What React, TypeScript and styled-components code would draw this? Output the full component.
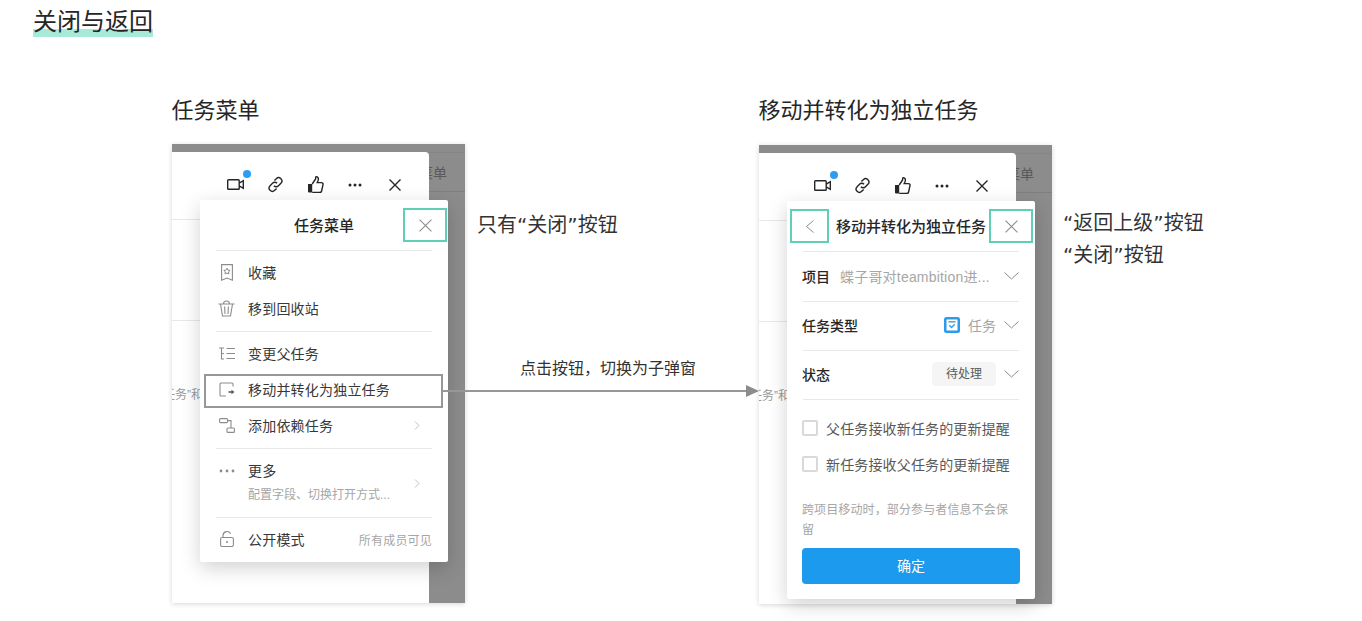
import React from "react";
import styled, { createGlobalStyle } from "styled-components";

const Global = createGlobalStyle`
  html, body { margin: 0; padding: 0; background: #fff; }
  body { font-family: "Liberation Sans", "Noto Sans CJK SC", sans-serif; color: #262626; }
`;

const Page = styled.div`
  padding: 9px 0 0 33px;
  width: 1362px;
  height: 621px;
  box-sizing: border-box;
  overflow: hidden;
`;
const Title = styled.h1`
  display: inline-block;
  margin: 0;
  padding-bottom: 2px;
  font-size: 24px;
  line-height: 26px;
  font-weight: 400;
  color: #262626;
  background: linear-gradient(to top, #a8ead8 8px, transparent 8px);
`;
const Board = styled.div`
  display: grid;
  grid-template-columns: 293px 294px 293px auto;
  margin: 56px 0 0 139px;
`;
const Column = styled.section``;
const SectionTitle = styled.h2<{ $gap: number }>`
  margin: 1px 0 ${(p) => p.$gap}px -0.5px;
  font-size: 22px;
  line-height: 34px;
  font-weight: 400;
  white-space: nowrap;
`;
const Mock = styled.div`
  position: relative;
  display: flex;
  width: 293px;
  height: 459px;
  padding-top: 8px;
  box-sizing: border-box;
  background: #8c8c8c;
  box-shadow: 0 1px 5px rgba(0, 0, 0, 0.16);
`;
const Win = styled.div`
  width: 257px;
  flex: none;
  background: #fff;
  border-top-right-radius: 4px;
  overflow: hidden;
`;
const Toolbar = styled.div`
  display: flex;
  align-items: center;
  justify-content: flex-end;
  height: 68px;
  padding: 0 14px 2px 0;
  box-sizing: border-box;
  border-bottom: 1px solid #e8e8e8;
`;
const ToolSlot = styled.span`
  position: relative;
  flex: none;
  width: 40px;
  display: flex;
  justify-content: center;
  align-items: center;
  svg { display: block; }
`;
const Dot = styled.span`
  position: absolute;
  top: -9px;
  left: 28px;
  width: 8px;
  height: 8px;
  border-radius: 50%;
  background: #2e9cf0;
`;
const BehindLine = styled.div`
  height: 1px;
  margin-top: 100px;
  background: #e8e8e8;
`;
const BehindText = styled.div`
  margin: 66px 0 0 -9px;
  font-size: 12px;
  line-height: 16px;
  color: #999;
  white-space: nowrap;
`;
const Side = styled.div`
  flex: 1;
  min-width: 0;
  height: 40px;
  display: flex;
  align-items: center;
  justify-content: flex-end;
  overflow: hidden;
  padding-right: 18px;
  border-bottom: 1px solid #7f7f7f;
  border-top: 1px solid #858585;
  box-sizing: border-box;
  font-size: 14px;
  color: #5a5a5a;
  white-space: nowrap;
`;
const Popup = styled.div<{ $height: number }>`
  position: absolute;
  left: 28px;
  top: 56px;
  width: 248px;
  height: ${(p) => p.$height}px;
  background: #fff;
  border-radius: 2px;
  box-shadow: 0 6px 20px rgba(0, 0, 0, 0.18);
  display: flex;
  flex-direction: column;
`;
const PopupHead = styled.div`
  position: relative;
  flex: none;
  height: 51px;
  margin: 0 16px;
  padding-bottom: 2px;
  border-bottom: 1px solid #e8e8e8;
  box-sizing: border-box;
  display: flex;
  align-items: center;
  justify-content: center;
  font-size: 15px;
  font-weight: 500;
  color: #262626;
  white-space: nowrap;
`;
const Mark = styled.div<{ $left?: number; $right?: number; $width: number }>`
  position: absolute;
  top: 8px;
  ${(p) => (p.$left !== undefined ? `left: ${p.$left}px;` : `right: ${p.$right}px;`)}
  width: ${(p) => p.$width}px;
  height: 34px;
  box-sizing: border-box;
  border: 2px solid #5fcfb5;
  display: flex;
  align-items: center;
  justify-content: center;
`;
const Group = styled.div`
  padding: 4px 16px;
  flex: none;
`;
const MoreGroup = styled.div`
  padding: 0 16px;
  flex: none;
`;
const Divider = styled.div`
  height: 1px;
  margin: 0 16px;
  background: #e8e8e8;
  flex: none;
`;
const MenuRow = styled.div<{ $hot?: boolean }>`
  position: relative;
  display: flex;
  align-items: center;
  height: 36px;
  padding-bottom: 2px;
  box-sizing: border-box;
  font-size: 14px;
  letter-spacing: 0.2px;
  color: #383838;
  white-space: nowrap;
  ${(p) =>
    p.$hot
      ? `&::before {
    content: "";
    position: absolute;
    left: -12px;
    right: -11px;
    top: 2px;
    bottom: 0;
    border: 2px solid #979797;
  }`
      : ""}
`;
const IconSlot = styled.span`
  position: relative;
  flex: none;
  width: 21px;
  margin-right: 11px;
  display: flex;
  justify-content: center;
  align-items: center;
  svg { display: block; }
`;
const MoreIconSlot = styled(IconSlot)`
  align-self: flex-start;
  margin-top: 20px;
`;
const RowLabel = styled.span`
  position: relative;
  flex: 1;
`;
const RowHint = styled.span`
  font-size: 12px;
  letter-spacing: 0.2px;
  color: #a6a6a6;
`;
const RightArrow = styled.span`
  flex: none;
  margin-right: 12px;
  svg { display: block; }
`;
const MoreRow = styled.div`
  display: flex;
  align-items: center;
  height: 68px;
`;
const MoreText = styled.div`
  flex: 1;
  font-size: 14px;
  letter-spacing: 0.2px;
  color: #383838;
  line-height: 24px;
  white-space: nowrap;
`;
const MoreSub = styled.div`
  font-size: 12px;
  letter-spacing: 0;
  color: #a6a6a6;
`;
const Fields = styled.div`
  flex: none;
  padding-top: 1px;
`;
const FieldRow = styled.div`
  height: 49px;
  margin: 0 16px;
  box-sizing: border-box;
  border-bottom: 1px solid #e8e8e8;
  display: flex;
  align-items: center;
  gap: 8px;
  font-size: 14px;
  white-space: nowrap;
  padding-bottom: 2px;
`;
const FieldLabel = styled.span<{ $grow?: boolean }>`
  flex: ${(p) => (p.$grow ? 1 : "none")};
  margin-left: -1px;
  color: #262626;
  font-weight: 500;
`;
const FieldValue = styled.span`
  flex: 1;
  min-width: 0;
  margin-left: 2px;
  color: #a6a6a6;
  letter-spacing: 0.2px;
`;
const FieldMuted = styled.span`
  color: #a6a6a6;
`;
const Chip = styled.span`
  width: 64px;
  height: 24px;
  border-radius: 4px;
  background: #f5f5f5;
  color: #595959;
  font-size: 12px;
  line-height: 24px;
  text-align: center;
`;
const Chevron = styled.span`
  flex: none;
  svg { display: block; }
`;
const CheckGroup = styled.div`
  margin: 10px 16px 0 15px;
`;
const CheckRow = styled.label`
  display: flex;
  align-items: center;
  gap: 8px;
  height: 36px;
  padding-bottom: 1px;
  box-sizing: border-box;
  font-size: 14px;
  letter-spacing: 0.15px;
  color: #595959;
  white-space: nowrap;
`;
const Box = styled.span`
  flex: none;
  width: 16px;
  height: 16px;
  box-sizing: border-box;
  border: 2px solid #d9d9d9;
  border-radius: 2px;
`;
const Note = styled.p`
  margin: 19px 16px 0 15px;
  width: 212px;
  font-size: 12px;
  letter-spacing: 0.12px;
  line-height: 19.5px;
  color: #a6a6a6;
`;
const Confirm = styled.button`
  display: block;
  flex: none;
  margin: 8px 15px 0;
  height: 36px;
  padding: 0 0 3px;
  border: none;
  border-radius: 4px;
  background: #1b9aee;
  color: #fff;
  font: inherit;
  font-size: 14px;
`;
const Connector = styled.div`
  padding-top: 116px;
`;
const Annotation = styled.div`
  margin-left: 12px;
  font-family: "DejaVu Sans", "Noto Sans CJK SC", sans-serif;
  font-size: 20px;
  line-height: 32px;
  color: #333;
  white-space: nowrap;
`;
const ArrowLabel = styled.div`
  margin: 116px 0 0 55px;
  font-size: 16px;
  line-height: 24px;
  color: #333;
  white-space: nowrap;
`;
const Arrow = styled.svg`
  position: relative;
  display: block;
  margin: 3px 0 0 -22px;
`;
const Notes = styled.div`
  padding: 114px 0 0;
  margin-left: -1px;
`;

const S = { fill: "none", stroke: "#8c8c8c", strokeWidth: 1.1 } as const;
const D = { fill: "none", stroke: "#262626", strokeWidth: 1.4 } as const;

const IconVideo = () => (
  <svg width="17" height="11" viewBox="0 0 17 11" {...D}>
    <rect x="0.7" y="0.7" width="11.500" height="9.600" rx="0.800" />
    <path d="M12.200 4.200l4.100-2.500v7.600l-4.100-2.500" />
  </svg>
);
const IconLink = () => (
  <svg width="17" height="17" viewBox="0 0 17 17" {...D}>
    <path d="M7.400 4.600l1.900-1.900a3.200 3.200 0 0 1 4.600 4.600l-2.400 2.400a3.200 3.200 0 0 1-4.600 0" />
    <path d="M9.600 12.400l-1.900 1.900a3.200 3.200 0 0 1-4.600-4.600l2.400-2.400a3.200 3.200 0 0 1 4.600 0" />
  </svg>
);
const IconThumb = () => (
  <svg width="17" height="17" viewBox="0 0 17 17">
    <path d="M1 8h4.200v8.500H2a1 1 0 0 1-1-1z" fill="#262626" />
    <path d="M5.200 8L8.600 3V1.400c0-.7 1.100-.9 1.900-.3 1 .8 1 2.400.5 3.700L10.200 6.600h4.200c1.200 0 1.900 1 1.600 2.100l-1.400 6.300c-.2 1-1 1.500-2 1.500H5.200" fill="none" stroke="#262626" strokeWidth="1.400" />
  </svg>
);
const IconDots = () => (
  <svg width="14" height="4" viewBox="0 0 14 4" fill="#262626">
    <circle cx="2" cy="2" r="1.500" />
    <circle cx="7" cy="2" r="1.500" />
    <circle cx="12" cy="2" r="1.500" />
  </svg>
);
const IconX = ({ c = "#262626", w = 1.4, s = 12 }: { c?: string; w?: number; s?: number }) => (
  <svg width={s} height={s} viewBox="0 0 12 12" fill="none" stroke={c} strokeWidth={w}>
    <path d="M.5.5l11 11M11.500.5l-11 11" />
  </svg>
);
const IconBack = () => (
  <svg width="8" height="13" viewBox="0 0 8 13" fill="none" stroke="#8c8c8c" strokeWidth="1">
    <path d="M7.500.5l-7 6 7 6" />
  </svg>
);
const IconStar = () => (
  <svg width="12" height="17" viewBox="0 0 12 17" {...S}>
    <path d="M.6.6h10.800v15.600L6 14 .6 16.200z" />
    <path d="M6 4.200l1 2 2.100.2-1.600 1.500.4 2.100L6 9l-1.900 1-.1-.1.4-2-1.600-1.500 2.100-.2z" strokeWidth="1" />
  </svg>
);
const IconTrash = () => (
  <svg width="17" height="17" viewBox="0 0 17 17" {...S}>
    <path d="M.5 4h16M5.500 4C5.500 1.800 6.800 1 8.500 1s3 .8 3 3M2.500 4L4.500 16h8L14.500 4M6.600 6.500l.4 7.500M10.400 6.500L10 14" />
  </svg>
);
const IconTree = () => (
  <svg width="16" height="13" viewBox="0 0 16 13" {...S}>
    <path d="M0 1h5M2.500 1v11H5M2.500 6.500H5M7.500 1.500H16M7.500 6.500H16M7.500 11.500H16" />
  </svg>
);
const IconMove = () => (
  <svg width="16" height="15" viewBox="0 0 16 15" {...S}>
    <path d="M14 4.500V2a1 1 0 0 0-1-1H2a1 1 0 0 0-1 1v11a1 1 0 0 0 1 1h5" />
    <path d="M9.500 10h3.500" stroke="#595959" strokeWidth="1.600" />
    <path d="M12.500 7.700l3 2.300-3 2.300z" fill="#595959" stroke="none" />
  </svg>
);
const IconDep = () => (
  <svg width="16" height="15" viewBox="0 0 16 15" {...S}>
    <rect x="0.600" y="0.600" width="8" height="4" rx="1" />
    <rect x="8" y="10" width="7.400" height="4.400" rx="1" />
    <path d="M8.600 2.600h3.400V10" />
  </svg>
);
const IconMoreDots = () => (
  <svg width="16" height="4" viewBox="0 0 16 4" fill="#8c8c8c">
    <circle cx="2" cy="2" r="1.400" />
    <circle cx="8" cy="2" r="1.400" />
    <circle cx="14" cy="2" r="1.400" />
  </svg>
);
const IconLock = () => (
  <svg width="14" height="16" viewBox="0 0 14 16" {...S}>
    <rect x="0.600" y="6.500" width="12.800" height="9" rx="1.500" />
    <path d="M3 6.500V4.500a4 4 0 0 1 7.600-1.700" />
    <circle cx="7" cy="11" r="1" fill="#8c8c8c" stroke="none" />
  </svg>
);
const IconRight = () => (
  <svg width="6" height="9" viewBox="0 0 6 9" fill="none" stroke="#bfbfbf" strokeWidth="1">
    <path d="M1 .5l4 4-4 4" />
  </svg>
);
const IconDown = () => (
  <svg width="15" height="8" viewBox="0 0 15 8" fill="none" stroke="#8c8c8c" strokeWidth="1">
    <path d="M.5.500l7 6.500 7-6.500" />
  </svg>
);
const IconTask = () => (
  <svg width="16" height="16" viewBox="0 0 16 16">
    <rect width="16" height="16" rx="2.500" fill="#2b9bea" />
    <rect x="2.500" y="2.500" width="11" height="11" rx="0.500" fill="#fff" />
    <path d="M4.500 4.300h7v1.100h-7z" fill="#3d6f96" />
    <path d="M5.300 8.300l2.200 2.200 3.200-3.200" fill="none" stroke="#2b9bea" strokeWidth="1.300" />
  </svg>
);

const Backdrop = ({ children, height }: { children: React.ReactNode; height: number }) => (
  <Mock>
    <Win>
      <Toolbar>
        <ToolSlot>
          <IconVideo />
          <Dot />
        </ToolSlot>
        <ToolSlot><IconLink /></ToolSlot>
        <ToolSlot><IconThumb /></ToolSlot>
        <ToolSlot><IconDots /></ToolSlot>
        <ToolSlot><IconX /></ToolSlot>
      </Toolbar>
      <BehindLine />
      <BehindText>任务”和</BehindText>
    </Win>
    <Side>任务菜单</Side>
    <Popup $height={height}>{children}</Popup>
  </Mock>
);

export default function App() {
  return (
    <Page>
      <Global />
      <Title>关闭与返回</Title>
      <Board>
        <Column>
          <SectionTitle $gap={16}>任务菜单</SectionTitle>
          <Backdrop height={362}>
            <PopupHead>
              任务菜单
              <Mark $right={-15} $width={44}>
                <IconX c="#8c8c8c" w={1} s={13} />
              </Mark>
            </PopupHead>
            <Group>
              <MenuRow><IconSlot><IconStar /></IconSlot><RowLabel>收藏</RowLabel></MenuRow>
              <MenuRow><IconSlot><IconTrash /></IconSlot><RowLabel>移到回收站</RowLabel></MenuRow>
            </Group>
            <Divider />
            <Group>
              <MenuRow><IconSlot><IconTree /></IconSlot><RowLabel>变更父任务</RowLabel></MenuRow>
              <MenuRow $hot><IconSlot><IconMove /></IconSlot><RowLabel>移动并转化为独立任务</RowLabel></MenuRow>
              <MenuRow>
                <IconSlot><IconDep /></IconSlot>
                <RowLabel>添加依赖任务</RowLabel>
                <RightArrow><IconRight /></RightArrow>
              </MenuRow>
            </Group>
            <Divider />
            <MoreGroup>
              <MoreRow>
                <MoreIconSlot><IconMoreDots /></MoreIconSlot>
                <MoreText>
                  更多
                  <MoreSub>配置字段、切换打开方式...</MoreSub>
                </MoreText>
                <RightArrow><IconRight /></RightArrow>
              </MoreRow>
            </MoreGroup>
            <Divider />
            <Group>
              <MenuRow><IconSlot><IconLock /></IconSlot><RowLabel>公开模式</RowLabel><RowHint>所有成员可见</RowHint></MenuRow>
            </Group>
          </Backdrop>
        </Column>
        <Connector>
          <Annotation>只有“关闭”按钮</Annotation>
          <ArrowLabel>点击按钮，切换为子弹窗</ArrowLabel>
          <Arrow width="316" height="14" viewBox="0 0 316 14">
            <path d="M0 7h304" stroke="#979797" strokeWidth="2" />
            <path d="M303 1l13 6-13 6z" fill="#8c8c8c" />
          </Arrow>
        </Connector>
        <Column>
          <SectionTitle $gap={17}>移动并转化为独立任务</SectionTitle>
          <Backdrop height={398}>
            <PopupHead>
              移动并转化为独立任务
              <Mark $left={-13} $width={39}><IconBack /></Mark>
              <Mark $right={-14} $width={44}><IconX c="#8c8c8c" w={1} s={13} /></Mark>
            </PopupHead>
            <Fields>
              <FieldRow>
                <FieldLabel>项目</FieldLabel>
                <FieldValue>蝶子哥对teambition进...</FieldValue>
                <Chevron><IconDown /></Chevron>
              </FieldRow>
              <FieldRow>
                <FieldLabel $grow>任务类型</FieldLabel>
                <IconTask />
                <FieldMuted>任务</FieldMuted>
                <Chevron><IconDown /></Chevron>
              </FieldRow>
              <FieldRow>
                <FieldLabel $grow>状态</FieldLabel>
                <Chip>待处理</Chip>
                <Chevron><IconDown /></Chevron>
              </FieldRow>
            </Fields>
            <CheckGroup>
              <CheckRow><Box />父任务接收新任务的更新提醒</CheckRow>
              <CheckRow><Box />新任务接收父任务的更新提醒</CheckRow>
            </CheckGroup>
            <Note>跨项目移动时，部分参与者信息不会保留</Note>
            <Confirm>确定</Confirm>
          </Backdrop>
        </Column>
        <Notes>
          <Annotation>“返回上级”按钮</Annotation>
          <Annotation>“关闭”按钮</Annotation>
        </Notes>
      </Board>
    </Page>
  );
}
